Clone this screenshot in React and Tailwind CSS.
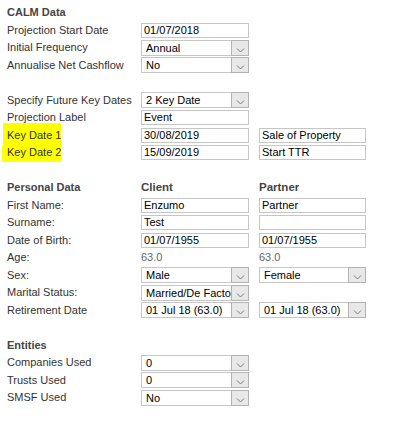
import React from "react";

const font = { fontFamily: '"Liberation Sans", Arial, sans-serif' };

function Input({ value }) {
  return (
    <div className="h-[15px] w-full border border-[#c6c6c6] bg-white pl-[2px] text-[11px] leading-[13px] text-black whitespace-nowrap overflow-hidden">
      {value}
    </div>
  );
}

function Select({ value }) {
  return (
    <div className="relative h-[16px] w-full border border-[#c6c6c6] bg-white text-[11px] leading-[14px] text-black">
      <div className="pl-[4px] pr-[18px] whitespace-nowrap overflow-hidden">{value}</div>
      <div className="absolute -right-px -top-px -bottom-px w-[18px] border border-[#b3b3b3] bg-[#e8e8e8] flex justify-center">
        <svg width="9" height="5" viewBox="0 0 9 5" className="mt-[7px]">
          <polyline points="1,0.5 4.5,4 8,0.5" fill="none" stroke="#7a7a7a" strokeWidth="1" />
        </svg>
      </div>
    </div>
  );
}

function Row({ label, client, partner, bold, highlight }) {
  return (
    <div className="grid grid-cols-[134px_108px_10px_107px] h-[17.5px] items-center">
      <div className={"relative text-[11px] whitespace-nowrap " + (bold ? "font-bold text-[#444] text-[11.5px]" : "text-[#333]")}>
        {highlight === 1 && <div className="absolute left-[-4px] top-[-4px] w-[58px] h-[23px] bg-[#ffff00]" />}
        {highlight === 2 && <div className="absolute left-[-5px] top-[2px] w-[59px] h-[16px] bg-[#ffff00]" />}
        <span className="relative">{label}</span>
      </div>
      <div>{client}</div>
      <div />
      <div>{partner}</div>
    </div>
  );
}

const Head = ({ children }) => (
  <div className="text-[11.5px] font-bold text-[#444] whitespace-nowrap">{children}</div>
);
const Age = ({ children }) => <div className="text-[11px] text-[#666]">{children}</div>;
const Blank = () => <div className="h-[17.5px]" />;

export default function App() {
  return (
    <div style={font} className="w-[418px] h-[445px] bg-white pl-[7px] pt-[3.75px] overflow-hidden">
      <Row label="CALM Data" bold />
      <Row label="Projection Start Date" client={<Input value="01/07/2018" />} />
      <Row label="Initial Frequency" client={<Select value="Annual" />} />
      <Row label="Annualise Net Cashflow" client={<Select value="No" />} />
      <Blank />
      <Row label="Specify Future Key Dates" client={<Select value="2 Key Date" />} />
      <Row label="Projection Label" client={<Input value="Event" />} />
      <Row label="Key Date 1" highlight={1} client={<Input value="30/08/2019" />} partner={<Input value="Sale of Property" />} />
      <Row label="Key Date 2" highlight={2} client={<Input value="15/09/2019" />} partner={<Input value="Start TTR" />} />
      <Blank />
      <Row label="Personal Data" bold client={<Head>Client</Head>} partner={<Head>Partner</Head>} />
      <Row label="First Name:" client={<Input value="Enzumo" />} partner={<Input value="Partner" />} />
      <Row label="Surname:" client={<Input value="Test" />} partner={<Input value="" />} />
      <Row label="Date of Birth:" client={<Input value="01/07/1955" />} partner={<Input value="01/07/1955" />} />
      <Row label="Age:" client={<Age>63.0</Age>} partner={<Age>63.0</Age>} />
      <Row label="Sex:" client={<Select value="Male" />} partner={<Select value="Female" />} />
      <Row label="Marital Status:" client={<Select value="Married/De Facto" />} />
      <Row label="Retirement Date" client={<Select value="01 Jul 18 (63.0)" />} partner={<Select value="01 Jul 18 (63.0)" />} />
      <Blank />
      <Row label="Entities" bold />
      <Row label="Companies Used" client={<Select value="0" />} />
      <Row label="Trusts Used" client={<Select value="0" />} />
      <Row label="SMSF Used" client={<Select value="No" />} />
    </div>
  );
}
